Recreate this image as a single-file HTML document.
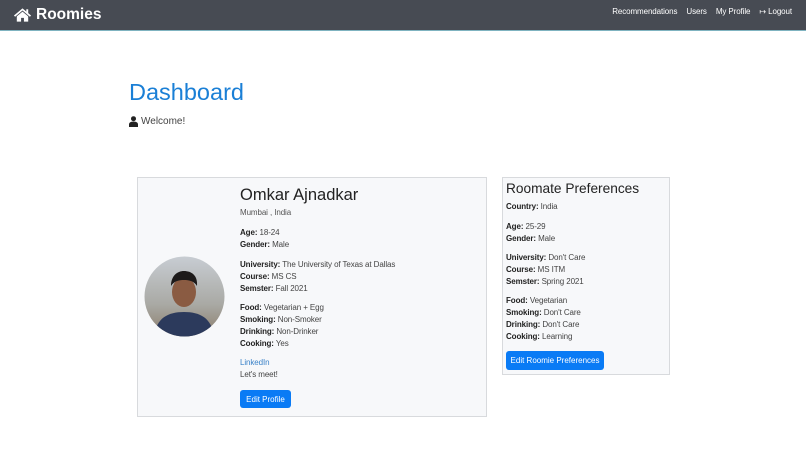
<!DOCTYPE html>
<html><head><meta charset="utf-8"><style>
*{margin:0;padding:0;box-sizing:border-box}
body{width:806px;height:471px;background:#fff;font-family:"Liberation Sans",sans-serif;color:#212529;position:relative;overflow:hidden}
.nav{position:absolute;left:0;top:0;width:806px;height:31px;background:#474b53;border-bottom:1px solid #7fb3c0}
.brand{position:absolute;left:13px;top:6px;color:#fff;font-size:15.5px;font-weight:bold;display:flex;align-items:center;gap:4px}
.links{position:absolute;right:14px;top:7px;color:#fff;font-size:8px;display:flex;gap:9px;letter-spacing:-0.1px}
.a{position:absolute;white-space:nowrap}
h1{position:absolute;left:129px;top:79px;font-size:23.5px;color:#1a7fd6;font-weight:normal}
.card{position:absolute;background:#f7f8fa;border:1px solid #d8dadd}
.t{position:absolute;font-size:8px;letter-spacing:-0.1px;color:#444;white-space:nowrap}
.t b{color:#222}
.btn{position:absolute;background:#0a7bf5;color:#fff;font-size:8px;border-radius:3px;display:flex;align-items:center;justify-content:center}
</style></head><body>
<div class="nav">
 <div class="brand"><svg width="19" height="16" viewBox="0 0 20 16"><path d="M10 1L1 8.5l1.2 1.3L10 3.3l7.8 6.5 1.2-1.3z" fill="#fff"/><path d="M4 9.5V15h4.5v-4h3v4H16V9.5L10 4.5z" fill="#fff"/><rect x="14" y="2" width="2" height="4" fill="#fff"/></svg>Roomies</div>
 <div class="links"><span>Recommendations</span><span>Users</span><span>My Profile</span><span>&#x21A6; Logout</span></div>
</div>
<h1>Dashboard</h1>
<div class="a" style="left:129px;top:116px;font-size:10px;color:#444;display:flex;align-items:center;gap:3px"><svg width="9" height="11" viewBox="0 0 9 11"><circle cx="4.5" cy="2.7" r="2.5" fill="#222"/><path d="M0 11V8.5C0 6.5 1.5 5.6 4.5 5.6S9 6.5 9 8.5V11z" fill="#222"/></svg>Welcome!</div>

<div class="card" style="left:137px;top:177px;width:350px;height:240px"></div>
<svg class="a" style="left:144px;top:256px" width="81" height="81" viewBox="0 0 81 81"><defs><clipPath id="c"><circle cx="40.5" cy="40.5" r="40"/></clipPath><linearGradient id="g" x1="0" y1="0" x2="0" y2="1"><stop offset="0" stop-color="#c8cdd3"/><stop offset="0.6" stop-color="#a9a9a4"/><stop offset="1" stop-color="#8a7c6a"/></linearGradient></defs><g clip-path="url(#c)"><rect width="81" height="81" fill="url(#g)"/><path d="M10 81C12 62 24 56 40 56s28 6 30 25z" fill="#2c3a5c"/><ellipse cx="40" cy="36" rx="12" ry="15" fill="#8a5b42"/><path d="M27 30c0-10 6-15 13-15s14 4 13 15c-3-5-8-6-13-6s-10 1-13 6z" fill="#1d1a1a"/></g></svg>
<div class="a" style="left:240px;top:186px;font-size:16.5px;color:#222">Omkar Ajnadkar</div>
<div class="t" style="left:240px;top:208px;color:#555">Mumbai , India</div>
<div class="t" style="left:240px;top:228px"><b>Age:</b> 18-24</div>
<div class="t" style="left:240px;top:240px"><b>Gender:</b> Male</div>
<div class="t" style="left:240px;top:260px"><b>University:</b> The University of Texas at Dallas</div>
<div class="t" style="left:240px;top:272px"><b>Course:</b> MS CS</div>
<div class="t" style="left:240px;top:284px"><b>Semster:</b> Fall 2021</div>
<div class="t" style="left:240px;top:303px"><b>Food:</b> Vegetarian + Egg</div>
<div class="t" style="left:240px;top:315px"><b>Smoking:</b> Non-Smoker</div>
<div class="t" style="left:240px;top:327px"><b>Drinking:</b> Non-Drinker</div>
<div class="t" style="left:240px;top:339px"><b>Cooking:</b> Yes</div>
<div class="t" style="left:240px;top:358px;color:#3a82c8">LinkedIn</div>
<div class="t" style="left:240px;top:370px">Let's meet!</div>
<div class="btn" style="left:240px;top:390px;width:51px;height:18px">Edit Profile</div>

<div class="card" style="left:502px;top:177px;width:168px;height:198px"></div>
<div class="a" style="left:506px;top:181px;font-size:13.7px;color:#222">Roomate Preferences</div>
<div class="t" style="left:506px;top:202px"><b>Country:</b> India</div>
<div class="t" style="left:506px;top:222px"><b>Age:</b> 25-29</div>
<div class="t" style="left:506px;top:234px"><b>Gender:</b> Male</div>
<div class="t" style="left:506px;top:253px"><b>University:</b> Don't Care</div>
<div class="t" style="left:506px;top:265px"><b>Course:</b> MS ITM</div>
<div class="t" style="left:506px;top:277px"><b>Semster:</b> Spring 2021</div>
<div class="t" style="left:506px;top:296px"><b>Food:</b> Vegetarian</div>
<div class="t" style="left:506px;top:308px"><b>Smoking:</b> Don't Care</div>
<div class="t" style="left:506px;top:320px"><b>Drinking:</b> Don't Care</div>
<div class="t" style="left:506px;top:332px"><b>Cooking:</b> Learning</div>
<div class="btn" style="left:506px;top:351px;width:98px;height:19px">Edit Roomie Preferences</div>
</body></html>
